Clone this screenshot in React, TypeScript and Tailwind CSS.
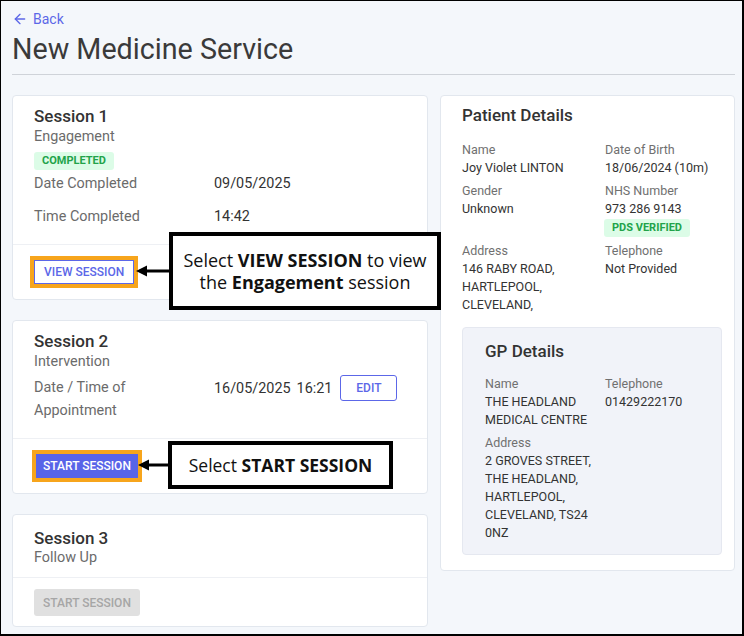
import React from 'react';
import { ArrowLeft } from 'lucide-react';

function Field({ label, children }: { label: string; children: React.ReactNode }) {
  return (
    <div>
      <div className="text-[#707070]">{label}</div>
      <div className="text-[#333]">{children}</div>
    </div>
  );
}

function Badge({ children }: { children: React.ReactNode }) {
  return (
    <span className="inline-flex items-center h-[18px] px-[8px] rounded-[3px] bg-[#dcfce7] text-[#22a34a] text-[11px] font-bold leading-[18px]">
      {children}
    </span>
  );
}

function CalloutArrow({ left, top }: { left: number; top: number }) {
  return (
    <svg
      className="absolute"
      style={{ left, top }}
      width="34"
      height="14"
      viewBox="0 0 34 14"
    >
      <line x1="8" y1="7" x2="34" y2="7" stroke="#000" strokeWidth="3" />
      <polygon points="0,7 11,1.5 11,12.5" fill="#000" />
    </svg>
  );
}

export default function App() {
  return (
    <div className="relative w-[744px] h-[636px] overflow-hidden bg-[#f4f7fb] border-l border-t border-r-2 border-b-2 border-black pl-[11px] pr-[7px] font-['Roboto',sans-serif]">
      <div className="border-b border-[#cfd3d9] pb-[7px]">
        <div className="flex items-center gap-[5px] pt-[8px] text-[14px] leading-5 text-[#5c67e8]">
          <ArrowLeft size={16} strokeWidth={2} />
          <span>Back</span>
        </div>
        <h1 className="mt-[2px] text-[28.7px] leading-[36px] font-normal text-[#3a3a3a]">New Medicine Service</h1>
      </div>

      <div className="mt-[20px] grid grid-cols-[416px_295px] gap-x-3 items-start">
        <div className="flex flex-col gap-5">
          {/* Session 1 */}
          <div className="bg-white border border-[#e2e7ee] rounded-[4px]">
            <div className="px-[21px] pt-[10px] pb-[15px]">
              <div className="text-[17px] leading-5 font-medium text-[#333]">Session 1</div>
              <div className="mt-[1px] text-[14.4px] leading-5 text-[#6b6b6b]">Engagement</div>
              <div className="mt-[5px] flex">
                <Badge>COMPLETED</Badge>
              </div>
              <div className="mt-[2px] grid grid-cols-[180px_1fr] gap-y-[9px] text-[14.4px] leading-6">
                <div className="text-[#6b6b6b]">Date Completed</div>
                <div className="text-[#333]">09/05/2025</div>
                <div className="text-[#6b6b6b]">Time Completed</div>
                <div className="text-[#333]">14:42</div>
              </div>
            </div>
            <div className="flex border-t border-[#eef0f4] px-[21px] pt-[15px] pb-[15px]">
              <button className="h-[24px] px-[9px] rounded-none border border-[#5c67e8] bg-white text-[12px] font-medium text-[#5c67e8] outline-4 outline-[#f7a51c]">
                VIEW SESSION
              </button>
            </div>
          </div>

          {/* Session 2 */}
          <div className="bg-white border border-[#e2e7ee] rounded-[4px]">
            <div className="px-[21px] pt-[10px] pb-[16px]">
              <div className="text-[17px] leading-5 font-medium text-[#333]">Session 2</div>
              <div className="mt-[1px] text-[14.4px] leading-5 text-[#6b6b6b]">Intervention</div>
              <div className="mt-[3px] grid grid-cols-[180px_1fr] text-[14.4px] leading-[23px]">
                <div className="pt-[1px] text-[#6b6b6b]">
                  <div>Date / Time of</div>
                  <div>Appointment</div>
                </div>
                <div className="flex items-center h-[26px] text-[#333]">
                  <span>16/05/2025</span>
                  <span className="ml-[6px]">16:21</span>
                  <button className="ml-[8px] h-[26px] w-[57px] rounded-[3px] border border-[#5c67e8] bg-white text-[12px] font-medium text-[#5c67e8]">
                    EDIT
                  </button>
                </div>
              </div>
            </div>
            <div className="flex border-t border-[#eef0f4] px-[21px] pt-[15px] pb-[15px]">
              <button className="ml-[2px] h-[24px] px-[7px] rounded-none bg-[#5864e8] text-[12px] font-medium text-white outline-4 outline-[#f7a51c]">
                START SESSION
              </button>
            </div>
          </div>

          {/* Session 3 */}
          <div className="bg-white border border-[#e2e7ee] rounded-[4px]">
            <div className="px-[21px] pt-[13px] pb-[9px]">
              <div className="text-[17px] leading-5 font-medium text-[#333]">Session 3</div>
              <div className="text-[14.4px] leading-5 text-[#6b6b6b]">Follow Up</div>
            </div>
            <div className="flex border-t border-[#eef0f4] px-[21px] pt-[11px] pb-[10px]">
              <button disabled className="h-[27px] px-[9px] rounded-[3px] bg-[#e0e0e0] text-[12px] font-medium text-[#a6a6a6]">
                START SESSION
              </button>
            </div>
          </div>
        </div>

        {/* Patient details */}
        <div className="bg-white border border-[#e2e7ee] rounded-[4px] pl-[21px] pr-[12px] pt-[9px] pb-[15px]">
          <div className="text-[17px] leading-5 font-medium text-[#333]">Patient Details</div>
          <div className="mt-[16px] grid grid-cols-[143px_1fr] gap-y-[5px] text-[12.5px] leading-[18px]">
            <Field label="Name">Joy Violet LINTON</Field>
            <Field label="Date of Birth">18/06/2024 (10m)</Field>
            <Field label="Gender">Unknown</Field>
            <div>
              <Field label="NHS Number">973 286 9143</Field>
              <div className="mt-[1px] -ml-[1px] flex">
                <Badge>PDS VERIFIED</Badge>
              </div>
            </div>
            <Field label="Address">
              <div>146 RABY ROAD,</div>
              <div>HARTLEPOOL,</div>
              <div>CLEVELAND,</div>
            </Field>
            <Field label="Telephone">Not Provided</Field>
          </div>

          <div className="mt-[13px] bg-[#f1f3f9] border border-[#e5e8f0] rounded-[4px] pl-[22px] pr-[12px] pt-[13px] pb-[12px]">
            <div className="text-[17px] leading-5 font-medium text-[#333]">GP Details</div>
            <div className="mt-[14px] grid grid-cols-[120px_1fr] gap-y-[5px] text-[12.5px] leading-[18px]">
              <Field label="Name">
                <div>THE HEADLAND</div>
                <div>MEDICAL CENTRE</div>
              </Field>
              <Field label="Telephone">01429222170</Field>
              <Field label="Address">
                <div>2 GROVES STREET,</div>
                <div>THE HEADLAND,</div>
                <div>HARTLEPOOL,</div>
                <div>CLEVELAND, TS24</div>
                <div>0NZ</div>
              </Field>
            </div>
          </div>
        </div>
      </div>

      {/* Callouts */}
      <CalloutArrow left={135} top={263} />
      <div className="absolute left-[168px] top-[231px] w-[272px] h-[78px] border-4 border-black bg-white flex flex-col items-center justify-center font-['Open_Sans',sans-serif] text-[18px] leading-[22px] text-[#111]">
        <div>
          Select <b>VIEW SESSION</b> to view
        </div>
        <div>
          the <b>Engagement</b> session
        </div>
      </div>

      <CalloutArrow left={137} top={457} />
      <div className="absolute left-[167px] top-[440px] w-[225px] h-[48px] border-4 border-black bg-white flex items-center justify-center font-['Open_Sans',sans-serif] text-[17.5px] text-[#111]">
        <div>
          Select <b>START SESSION</b>
        </div>
      </div>
    </div>
  );
}
